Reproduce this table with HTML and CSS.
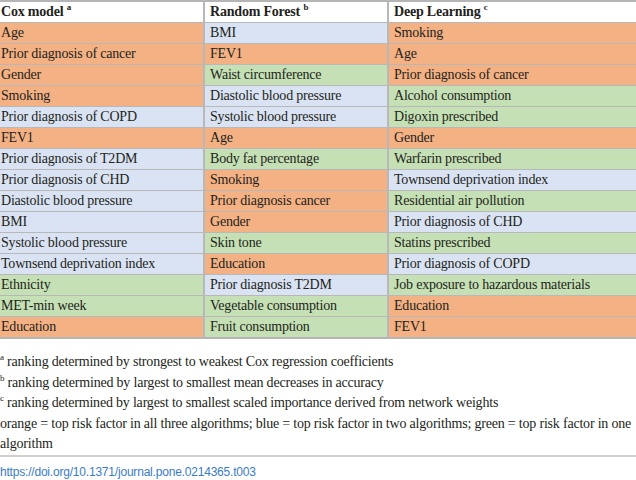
FILE: index.html
```html
<!DOCTYPE html>
<html>
<head>
<meta charset="utf-8">
<link rel="stylesheet" href="styles.css">
</head>
<body>
<div class="page">
  <table class="risk">
    <thead>
      <tr><th class="c1">Cox model <sup>a</sup></th><th class="c2">Random Forest <sup>b</sup></th><th class="c3">Deep Learning <sup>c</sup></th></tr>
    </thead>
    <tbody>
      <tr><td class="o">Age</td><td class="b">BMI</td><td class="o">Smoking</td></tr>
      <tr><td class="o">Prior diagnosis of cancer</td><td class="o">FEV1</td><td class="o">Age</td></tr>
      <tr><td class="o">Gender</td><td class="g">Waist circumference</td><td class="o">Prior diagnosis of cancer</td></tr>
      <tr><td class="o">Smoking</td><td class="b">Diastolic blood pressure</td><td class="g">Alcohol consumption</td></tr>
      <tr><td class="b">Prior diagnosis of COPD</td><td class="b">Systolic blood pressure</td><td class="g">Digoxin prescribed</td></tr>
      <tr><td class="o">FEV1</td><td class="o">Age</td><td class="o">Gender</td></tr>
      <tr><td class="b">Prior diagnosis of T2DM</td><td class="g">Body fat percentage</td><td class="g">Warfarin prescribed</td></tr>
      <tr><td class="b">Prior diagnosis of CHD</td><td class="o">Smoking</td><td class="b">Townsend deprivation index</td></tr>
      <tr><td class="b">Diastolic blood pressure</td><td class="o">Prior diagnosis cancer</td><td class="g">Residential air pollution</td></tr>
      <tr><td class="b">BMI</td><td class="o">Gender</td><td class="b">Prior diagnosis of CHD</td></tr>
      <tr><td class="b">Systolic blood pressure</td><td class="g">Skin tone</td><td class="g">Statins prescribed</td></tr>
      <tr><td class="b">Townsend deprivation index</td><td class="o">Education</td><td class="b">Prior diagnosis of COPD</td></tr>
      <tr><td class="g">Ethnicity</td><td class="b">Prior diagnosis T2DM</td><td class="g">Job exposure to hazardous materials</td></tr>
      <tr><td class="g">MET-min week</td><td class="g">Vegetable consumption</td><td class="o">Education</td></tr>
      <tr><td class="o">Education</td><td class="g">Fruit consumption</td><td class="o">FEV1</td></tr>
    </tbody>
  </table>
  <div class="notes">
    <p><sup>a</sup> ranking determined by strongest to weakest Cox regression coefficients</p>
    <p><sup>b</sup> ranking determined by largest to smallest mean decreases in accuracy</p>
    <p><sup>c</sup> ranking determined by largest to smallest scaled importance derived from network weights</p>
    <p>orange = top risk factor in all three algorithms; blue = top risk factor in two algorithms; green = top risk factor in one algorithm</p>
  </div>
  <a class="doi" href="#">https://doi.org/10.1371/journal.pone.0214365.t003</a>
</div>
</body>
</html>
```
FILE: styles.css
```css
html, body {
  margin: 0;
  padding: 0;
  background: #ffffff;
}
.page {
  width: 636px;
  font-family: "Liberation Serif", "Times New Roman", serif;
  color: #231f20;
}
.risk {
  width: 636px;
  border-collapse: collapse;
  border-top: 2px solid #b5b5b5;
  border-bottom: 2px solid #b5b5b5;
  table-layout: fixed;
}
.risk th, .risk td {
  height: 21px;
  padding: 0 0 0 1px;
  font-size: 14px;
  letter-spacing: -0.2px;
  line-height: 20px;
  text-align: left;
  white-space: nowrap;
  border-bottom: 1px solid #b8b8b8;
  border-left: 2px solid #b8b8b8;
  box-sizing: border-box;
}
.risk th:first-child, .risk td:first-child {
  border-left: none;
}
.risk th {
  font-weight: bold;
  background: #ffffff;
}
.risk th.c1 { width: 204px; }
.risk th.c2 { width: 184px; padding-left: 5px; }
.risk th.c3 { padding-left: 5px; }
.risk td:nth-child(2), .risk td:nth-child(3) { padding-left: 5px; }
.risk sup {
  font-size: 9px;
  line-height: 0;
  vertical-align: 6px;
}
.o { background: #f4b183; }
.b { background: #dae3f3; }
.g { background: #c5e0b4; }
.notes {
  padding: 13px 0 0 0;
  border-bottom: 2px solid #d0d0d0;
}
.notes p {
  margin: 0;
  font-size: 14px;
  letter-spacing: -0.2px;
  line-height: 20.5px;
}
.notes sup {
  font-size: 9px;
  line-height: 0;
  vertical-align: 6px;
}
.doi {
  display: block;
  margin-top: 8px;
  font-family: "Liberation Sans", Arial, sans-serif;
  font-size: 12px;
  letter-spacing: -0.2px;
  line-height: 14px;
  color: #3a7bc8;
  text-decoration: none;
}
```
